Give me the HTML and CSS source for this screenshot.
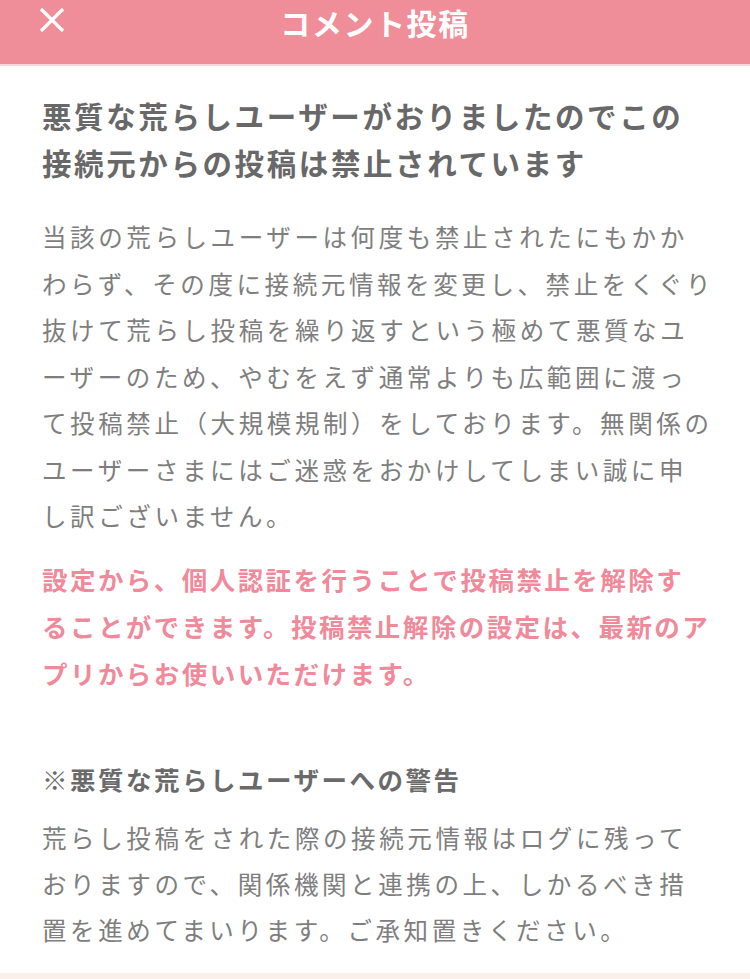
FILE: index.html
```html
<!DOCTYPE html>
<html lang="ja">
<head>
<meta charset="utf-8">
<title>コメント投稿</title>
<link rel="stylesheet" href="styles.css">
</head>
<body>
<header class="header">
  <div class="close">
    <svg width="26" height="26" viewBox="0 0 26 26" aria-hidden="true">
      <path d="M2 2 L24 24 M24 2 L2 24" stroke="#ffffff" stroke-width="3.2" stroke-linecap="butt" fill="none"/>
    </svg>
  </div>
  <h1 class="title">コメント投稿</h1>
  <div class="spacer"></div>
</header>
<main class="content">
  <h2 class="lead">悪質な荒らしユーザーがおりましたのでこの<br>接続元からの投稿は禁止されています</h2>
  <p class="body">当該の荒らしユーザーは何度も禁止されたにもかか<br>わらず、その度に接続元情報を変更し、禁止をくぐり<br>抜けて荒らし投稿を繰り返すという極めて悪質なユ<br>ーザーのため、やむをえず通常よりも広範囲に渡っ<br>て投稿禁止（大規模規制）をしております。無関係の<br>ユーザーさまにはご迷惑をおかけしてしまい誠に申<br>し訳ございません。</p>
  <p class="notice">設定から、個人認証を行うことで投稿禁止を解除す<br>ることができます。投稿禁止解除の設定は、最新のア<br>プリからお使いいただけます。</p>
  <h3 class="warn">※悪質な荒らしユーザーへの警告</h3>
  <p class="body last">荒らし投稿をされた際の接続元情報はログに残って<br>おりますので、関係機関と連携の上、しかるべき措<br>置を進めてまいります。ご承知置きください。</p>
</main>
<footer class="foot"></footer>
</body>
</html>
```
FILE: styles.css
```css
html, body {
  margin: 0;
  padding: 0;
  background: #ffffff;
}
body {
  width: 750px;
  min-height: 979px;
  display: flex;
  flex-direction: column;
  font-family: "Noto Sans CJK JP", "Noto Sans", sans-serif;
}
.header {
  height: 64px;
  background: #ef8e98;
  border-bottom: 2px solid #f7d6de;
  display: grid;
  grid-template-columns: 1fr auto 1fr;
  align-items: start;
}
.close {
  padding: 7px 0 0 39px;
  line-height: 0;
}
.title {
  margin: 0;
  font-size: 30px;
  font-weight: 700;
  line-height: 44px;
  letter-spacing: 1.6px;
  color: #ffffff;
}
.content {
  padding: 26px 0 0 42px;
  white-space: nowrap;
}
.lead {
  margin: 0;
  font-size: 29.5px;
  font-weight: 700;
  line-height: 47px;
  letter-spacing: 2.6px;
  color: #686868;
}
.body {
  margin: 28px 0 0;
  font-size: 24.5px;
  font-weight: 400;
  line-height: 46.5px;
  letter-spacing: 3.6px;
  color: #7e7e7e;
}
.notice {
  margin: 15px 0 0;
  font-size: 25.5px;
  font-weight: 700;
  line-height: 47px;
  letter-spacing: 2.45px;
  color: #f08a9a;
}
.warn {
  margin: 59px 0 0;
  font-size: 25.5px;
  font-weight: 700;
  line-height: 47px;
  letter-spacing: 2.5px;
  color: #6a6a6a;
}
.body.last {
  margin-top: 13.5px;
  line-height: 46px;
}
.foot {
  margin-top: 20px;
  flex: 1;
  background: #fbf1ea;
}
```
